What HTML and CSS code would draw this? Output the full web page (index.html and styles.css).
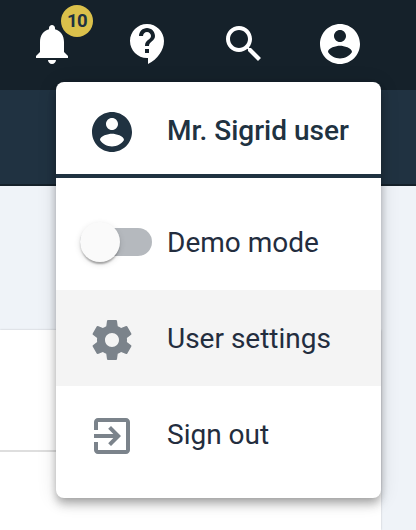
FILE: index.html
```html
<!DOCTYPE html>
<html lang="en">
<head>
<meta charset="utf-8">
<title>User menu</title>
<link rel="stylesheet" href="styles.css">
</head>
<body>
<svg class="defs" width="0" height="0" aria-hidden="true">
  <symbol id="account" viewBox="0 0 24 24"><path d="M12 2C6.48 2 2 6.48 2 12s4.48 10 10 10 10-4.48 10-10S17.52 2 12 2zm0 3c1.66 0 3 1.34 3 3s-1.34 3-3 3-3-1.34-3-3 1.34-3 3-3zm0 14.2c-2.5 0-4.71-1.28-6-3.22.03-1.99 4-3.08 6-3.08 1.99 0 5.97 1.09 6 3.08-1.29 1.94-3.5 3.22-6 3.22z"/></symbol>
</svg>
<header class="topbar">
  <button class="action" aria-label="Notifications">
    <svg class="icon" viewBox="0 0 24 24"><path d="M12 22c1.1 0 2-.9 2-2h-4c0 1.1.89 2 2 2zm6-6v-5c0-3.07-1.64-5.64-4.5-6.32V4c0-.83-.67-1.5-1.5-1.5s-1.5.67-1.5 1.5v.68C7.63 5.36 6 7.92 6 11v5l-2 2v1h16v-1l-2-2z"/></svg>
    <span class="badge">10</span>
  </button>
  <button class="action" aria-label="Help">
    <svg class="icon" viewBox="0 0 24 24"><path d="M11.5 2C6.81 2 3 5.81 3 10.5S6.81 19 11.5 19h.5v3c4.86-2.34 8-7 8-11.5C20 5.81 16.19 2 11.5 2zm1 14.5h-2v-2h2v2zm0-3.500h-2c0-3.250 3-3 3-5 0-1.100-.9-2-2-2s-2 .9-2 2h-2c0-2.210 1.790-4 4-4s4 1.790 4 4c0 2.500-3 2.750-3 5z"/></svg>
  </button>
  <button class="action" aria-label="Search">
    <svg class="icon" viewBox="0 0 24 24"><path d="M15.500 14h-.79l-.28-.27C15.410 12.590 16 11.110 16 9.500 16 5.910 13.090 3 9.500 3S3 5.910 3 9.500 5.910 16 9.500 16c1.610 0 3.090-.59 4.230-1.570l.27.28v.79l5 4.990L20.490 19l-4.990-5zm-6 0C7.010 14 5 11.990 5 9.500S7.010 5 9.500 5 14 7.010 14 9.500 11.990 14 9.500 14z"/></svg>
  </button>
  <button class="action" aria-label="Account">
    <svg class="icon"><use href="#account"/></svg>
  </button>
</header>
<div class="subbar"></div>
<main class="content">
  <section class="card"><div class="card-head"></div></section>
</main>
<nav class="menu">
  <div class="menu-header">
    <svg class="icon"><use href="#account"/></svg>
    <span class="label">Mr. Sigrid user</span>
  </div>
  <div class="menu-list">
    <div class="item">
      <span class="toggle"><span class="thumb"></span></span>
      <span class="label">Demo mode</span>
    </div>
    <div class="item active">
      <svg class="icon" viewBox="0 0 24 24"><path d="M19.430 12.980c.04-.32.07-.64.07-.98s-.03-.66-.07-.98l2.110-1.650c.19-.15.24-.42.12-.64l-2-3.460c-.12-.22-.39-.3-.61-.22l-2.490 1c-.52-.4-1.080-.73-1.690-.98l-.38-2.650C14.460 2.180 14.250 2 14 2h-4c-.25 0-.46.18-.49.42l-.38 2.650c-.61.25-1.170.59-1.690.98l-2.490-1c-.23-.09-.49 0-.61.22l-2 3.460c-.13.22-.07.49.12.64l2.110 1.650c-.04.32-.07.65-.07.98s.03.66.07.98l-2.110 1.650c-.19.15-.24.42-.12.64l2 3.460c.12.22.39.3.61.22l2.490-1c.52.4 1.080.73 1.690.98l.38 2.650c.03.24.24.42.49.42h4c.25 0 .46-.18.49-.42l.38-2.650c.61-.25 1.170-.59 1.690-.98l2.490 1c.23.09.49 0 .61-.22l2-3.460c.12-.22.07-.49-.12-.64l-2.110-1.650zM12 15.500c-1.930 0-3.500-1.570-3.500-3.500s1.570-3.500 3.500-3.500 3.500 1.570 3.500 3.500-1.570 3.500-3.500 3.500z"/></svg>
      <span class="label">User settings</span>
    </div>
    <div class="item">
      <svg class="icon" viewBox="0 0 24 24"><path d="M10.090 15.590L11.500 17l5-5-5-5-1.410 1.410L12.670 11H3v2h9.670l-2.580 2.590zM19 3H5c-1.110 0-2 .9-2 2v4h2V5h14v14H5v-4H3v4c0 1.100.89 2 2 2h14c1.100 0 2-.9 2-2V5c0-1.100-.9-2-2-2z"/></svg>
      <span class="label">Sign out</span>
    </div>
  </div>
</nav>
</body>
</html>
```
FILE: styles.css
```css
* { box-sizing: border-box; }

body {
  position: relative;
  display: flex;
  flex-direction: column;
  height: 530px;
  margin: 0;
  overflow: hidden;
  background: #eff3f8;
  font-family: Roboto, "Liberation Sans", sans-serif;
  font-size: 28px;
  color: #232d3e;
}

.defs { position: absolute; }

.icon {
  display: block;
  flex: none;
  width: 48px;
  height: 48px;
  fill: currentColor;
}

.topbar {
  display: flex;
  flex: none;
  gap: 48px;
  height: 90px;
  padding: 20px 0 0 28px;
  background: #15212a;
}

.action {
  position: relative;
  width: 48px;
  height: 48px;
  padding: 0;
  border: 0;
  background: none;
  color: #fff;
}

.badge {
  position: absolute;
  top: -15px;
  left: 33px;
  width: 32px;
  height: 32px;
  border-radius: 50%;
  background: #dbc14b;
  color: #203241;
  font: 700 18.5px/32px Roboto, sans-serif;
  letter-spacing: -0.5px;
  text-align: center;
}

.subbar {
  flex: none;
  height: 96px;
  border-bottom: 2px solid #15212a;
  background: #203241;
}

.content {
  flex: 1;
  padding: 144px 35px 0 0;
}

.card {
  height: 100%;
  background: #fff;
  box-shadow: 0 0 2px rgba(0, 0, 0, .2);
}

.card-head {
  height: 122px;
  border-bottom: 2px solid #dedede;
}

.menu {
  position: absolute;
  top: 82px;
  left: 56px;
  width: 325px;
  height: 416px;
  border-radius: 8px;
  background: #fff;
  box-shadow: 0 4px 8px -2px rgba(0, 0, 0, .25), 0 8px 10px rgba(0, 0, 0, .14), 0 2px 20px rgba(0, 0, 0, .12);
}

.menu-header,
.item {
  display: flex;
  align-items: center;
  gap: 31px;
  height: 96px;
  padding: 0 32px;
  white-space: nowrap;
}

.menu-header {
  padding-top: 8px;
  border-bottom: 4px solid #203241;
  color: #203241;
  font-weight: 500;
}

.menu-header .label { padding-bottom: 4px; }

.menu-list { padding: 16px 0; }

.item .icon { margin-top: 4px; color: #7b838b; }

.active { background: #f4f4f4; }

.toggle {
  flex: none;
  width: 72px;
  height: 28px;
  margin: 0 -16px 0 -8px;
  border-radius: 14px;
  background: #b5b9be;
}

.thumb {
  display: block;
  width: 40px;
  height: 40px;
  margin-top: -6px;
  border-radius: 50%;
  background: #fafafa;
  box-shadow: 0 4px 2px -2px rgba(0, 0, 0, .2), 0 2px 2px rgba(0, 0, 0, .14), 0 2px 6px rgba(0, 0, 0, .12);
}
```
